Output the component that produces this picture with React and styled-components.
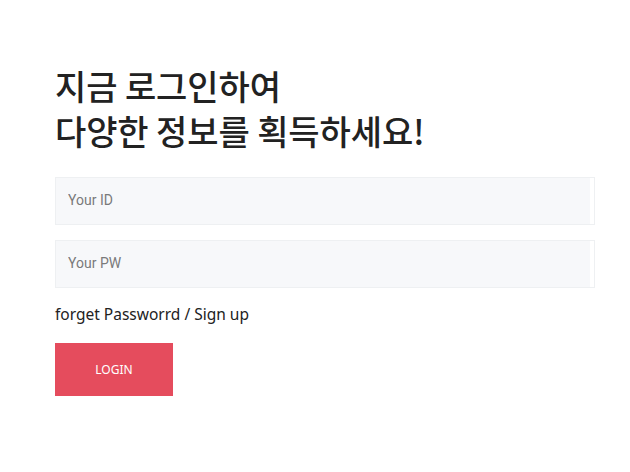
import React from 'react'
import styled, { createGlobalStyle } from 'styled-components'

const GlobalStyle = createGlobalStyle`
  html, body {
    margin: 0;
    padding: 0;
    background: #fff;
  }
  * { box-sizing: border-box; }
`;

const Page = styled.div`
  width: 630px;
  height: 472px;
  padding: 63px 35px 0 55px;
  font-family: "Noto Sans", "Noto Sans CJK KR", sans-serif;
`;

const Title = styled.h1`
  margin: 0 0 24px;
  font-family: "Noto Sans CJK KR", sans-serif;
  font-size: 34px;
  font-weight: 500;
  line-height: 45px;
  color: #222;
  letter-spacing: -0.1px;
`;

const Form = styled.form`
  display: flex;
  flex-direction: column;
`;

const Field = styled.div`
  height: 48px;
  border: 1px solid #eef0f2;
  margin-bottom: 15px;
  padding-right: 4px;
  display: flex;
`;

const Input = styled.input`
  flex: 1;
  border: none;
  outline: none;
  background: #f7f8fa;
  padding: 0 12px 2px;
  font-family: "Roboto", sans-serif;
  font-size: 14px;
  color: #333;
  &::placeholder { color: #7a7a7a; }
`;

const Links = styled.p`
  margin: 0 0 18px;
  font-size: 15.5px;
  line-height: 22px;
  color: #222;
`;

const LoginButton = styled.button`
  width: 118px;
  height: 53px;
  border: none;
  background: #e54c5d;
  color: #fff;
  font-family: "Noto Sans", sans-serif;
  font-size: 12px;
  cursor: pointer;
`;

export default function App() {
  return (
    <>
      <GlobalStyle />
      <Page>
        <Title>
          지금 로그인하여
          <br />
          다양한 정보를 획득하세요!
        </Title>
        <Form onSubmit={e => e.preventDefault()}>
          <Field>
            <Input placeholder="Your ID" />
          </Field>
          <Field>
            <Input type="password" placeholder="Your PW" />
          </Field>
          <Links>forget Passworrd / Sign up</Links>
          <div>
            <LoginButton type="submit">LOGIN</LoginButton>
          </div>
        </Form>
      </Page>
    </>
  )
}
